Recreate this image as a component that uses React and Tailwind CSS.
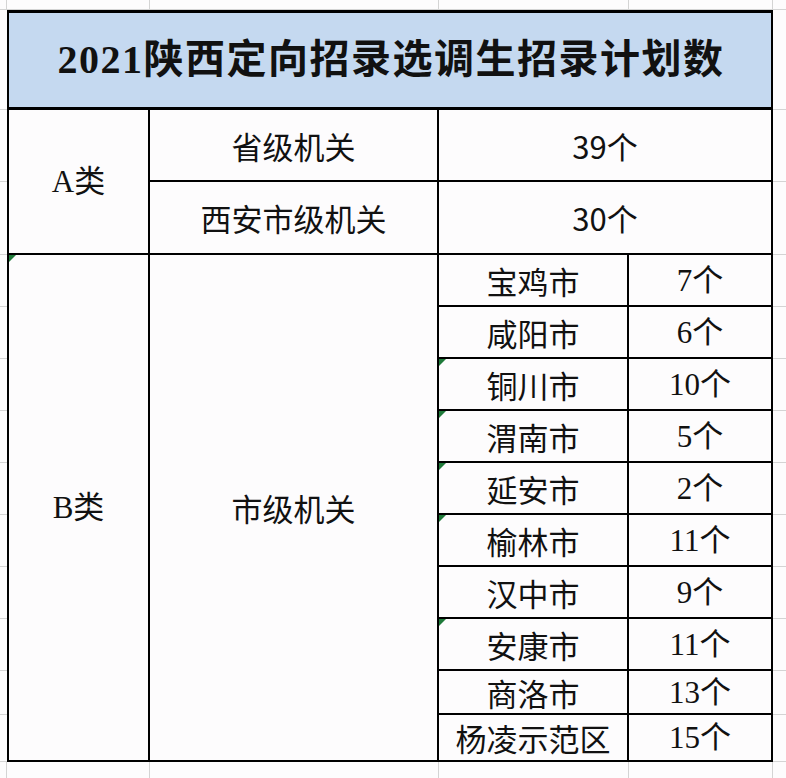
import React from "react";

const serif = "font-['Liberation_Serif','Noto_Sans_CJK_SC',serif]";
const sans = "font-['Noto_Sans_CJK_SC','Noto_Sans',sans-serif]";

function Tri() {
  return (
    <span className="absolute left-0 top-0 w-0 h-0 border-t-[7px] border-r-[7px] border-t-[#1f7a3a] border-r-transparent" />
  );
}

const cities = [
  { name: "宝鸡市", n: "7个", row: "row-start-5", tri: false },
  { name: "咸阳市", n: "6个", row: "row-start-6", tri: false },
  { name: "铜川市", n: "10个", row: "row-start-7", tri: true },
  { name: "渭南市", n: "5个", row: "row-start-8", tri: true },
  { name: "延安市", n: "2个", row: "row-start-9", tri: true },
  { name: "榆林市", n: "11个", row: "row-start-10", tri: true },
  { name: "汉中市", n: "9个", row: "row-start-11", tri: false },
  { name: "安康市", n: "11个", row: "row-start-12", tri: true },
  { name: "商洛市", n: "13个", row: "row-start-13", tri: false },
  { name: "杨凌示范区", n: "15个", row: "row-start-14", tri: false },
];

const sideRows = [
  "row-start-2", "row-start-3", "row-start-4", "row-start-5", "row-start-6",
  "row-start-7", "row-start-8", "row-start-9", "row-start-10", "row-start-11",
  "row-start-12", "row-start-13", "row-start-14",
];

const topCols = ["col-start-1", "col-start-2", "col-start-3", "col-start-4", "col-start-5"];

export default function App() {
  const cell = "flex items-center justify-center text-[31px] leading-none text-[#111] border-black";
  return (
    <div className="w-[786px] h-[778px] bg-[#fdfcfd] overflow-hidden">
      <div className="grid grid-cols-[7px_143px_289px_190px_144px_13px] grid-rows-[10px_100px_72px_73px_repeat(8,52px)_44px_47px_16px]">
        {/* top gutter */}
        {topCols.map((c) => (
          <div key={"t" + c} className={`${c} row-start-1 border-r border-b border-[#d4d4d4]`} />
        ))}
        <div className="col-start-6 row-start-1 border-b border-[#d4d4d4]" />
        {/* side gutters */}
        {sideRows.map((r) => (
          <React.Fragment key={"s" + r}>
            <div className={`col-start-1 ${r} border-b border-[#d4d4d4]`} />
            <div className={`col-start-6 ${r} border-b border-[#d4d4d4]`} />
          </React.Fragment>
        ))}
        {/* bottom gutter */}
        {topCols.map((c) => (
          <div key={"b" + c} className={`${c} row-start-15 border-r border-[#d4d4d4]`} />
        ))}
        <div className="col-start-6 row-start-15" />

        {/* title */}
        <div className={`col-start-2 col-span-4 row-start-2 bg-[#c5d9f0] border-l-2 border-r-2 border-t-[3px] border-b-[3px] border-black flex items-center justify-center`}>
          <span className={`${serif} text-[40px] font-bold leading-none text-[#111] tracking-[1.5px] pl-[2px]`}>
            2021陕西定向招录选调生招录计划数
          </span>
        </div>

        {/* A rows */}
        <div className={`${cell} ${serif} col-start-2 row-start-3 row-span-2 border-l-2 border-r-2 border-b-2`}>
          A类
        </div>
        <div className={`${cell} ${sans} col-start-3 row-start-3 border-r-2 border-b-2`}>省级机关</div>
        <div className={`${cell} ${sans} col-start-4 col-span-2 row-start-3 border-r-2 border-b-2`}>39个</div>
        <div className={`${cell} ${sans} col-start-3 row-start-4 border-r-2 border-b-2`}>西安市级机关</div>
        <div className={`${cell} ${sans} col-start-4 col-span-2 row-start-4 border-r-2 border-b-2`}>30个</div>

        {/* B rows */}
        <div className={`${cell} ${serif} relative col-start-2 row-start-5 row-span-10 border-l-2 border-r-2 border-b-2`}>
          <Tri />
          B类
        </div>
        <div className={`${cell} ${sans} col-start-3 row-start-5 row-span-10 border-r-2 border-b-2`}>市级机关</div>
        {cities.map((c) => (
          <React.Fragment key={c.name}>
            <div className={`${cell} ${sans} relative col-start-4 ${c.row} border-r-2 border-b-2`}>
              {c.tri && <Tri />}
              {c.name}
            </div>
            <div className={`${cell} ${serif} col-start-5 ${c.row} border-r-2 border-b-2`}>{c.n}</div>
          </React.Fragment>
        ))}
      </div>
    </div>
  );
}
